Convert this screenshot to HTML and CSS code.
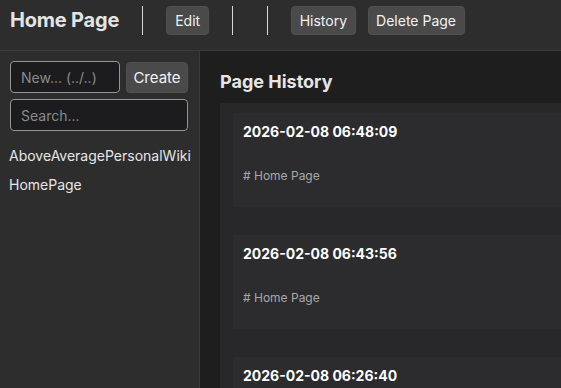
FILE: index.html
```html
<!DOCTYPE html>
<html lang="en">
<head>
    <meta charset="UTF-8">
    <meta name="viewport" content="width=device-width, initial-scale=1.0">
    <title>Home Page - History</title>
    <link rel="stylesheet" href="styles.css">
</head>
<body>
    <header class="topbar">
        <h1 class="page-title">Home Page</h1>
        <span class="sep"></span>
        <button class="btn">Edit</button>
        <span class="sep"></span>
        <span class="sep"></span>
        <button class="btn">History</button>
        <button class="btn">Delete Page</button>
    </header>

    <div class="layout">
        <aside class="sidebar">
            <div class="new-row">
                <input class="field new-input" type="text" placeholder="New... (../..)">
                <button class="btn create-btn">Create</button>
            </div>
            <input class="field search-input" type="text" placeholder="Search...">
            <nav class="page-list">
                <a href="#">AboveAveragePersonalWiki</a>
                <a href="#">HomePage</a>
            </nav>
        </aside>

        <main class="content">
            <h2 class="section-title">Page History</h2>
            <div class="history-panel">
                <div class="history-item">
                    <h3>2026-02-08 06:48:09</h3>
                    <div class="preview"># Home Page</div>
                </div>
                <div class="history-item">
                    <h3>2026-02-08 06:43:56</h3>
                    <div class="preview"># Home Page</div>
                </div>
                <div class="history-item">
                    <h3>2026-02-08 06:26:40</h3>
                    <div class="preview"># Home Page</div>
                </div>
            </div>
        </main>
    </div>
</body>
</html>
```

FILE: styles.css
```css
body {
    font-family: Inter, "Liberation Sans", sans-serif;
    background: #1e1e1e;
    color: #e6e6e6;
    margin: 0;
    padding: 0;
    height: 100vh;
    display: flex;
    flex-direction: column;
    overflow: hidden;
}

/* Barra superior */
.topbar {
    display: flex;
    align-items: center;
    gap: 12px;
    padding: 6px 10px 15px;
    background: #2d2d2d;
    border-bottom: 1px solid #3a3a3a;
    min-width: 700px;
}
.page-title {
    margin: 0;
    font-size: 20px;
    font-weight: 700;
    letter-spacing: -0.2px;
    color: #e4e4e4;
    line-height: 29px;
}
.sep {
    width: 1px;
    height: 29px;
    background: #d8d8d8;
    margin: 0 11px;
}
.btn {
    font-family: inherit;
    font-size: 14px;
    color: #f2f2f2;
    background: #4a4a4a;
    border: 1px solid #505050;
    border-radius: 4px;
    height: 29px;
    min-width: 43px;
    padding: 0 7.5px;
    cursor: pointer;
}
.btn:hover {
    background: #555;
}

/* Columnas */
.layout {
    flex: 1;
    display: flex;
    min-width: 700px;
}
.sidebar {
    width: 178px;
    padding: 10px 11px 10px 10px;
    background: #2d2d2d;
    border-right: 1px solid #3a3a3a;
}
.new-row {
    display: flex;
    gap: 6px;
}
.field {
    font-family: inherit;
    font-size: 14px;
    color: #e6e6e6;
    background: #1c1c1e;
    border: 1px solid #959595;
    border-radius: 4px;
    height: 32px;
    padding: 0 10px;
    box-sizing: border-box;
}
.field::placeholder {
    color: #8a8a8a;
}
.new-input {
    width: 110px;
}
.create-btn {
    flex: 1;
    height: 31px;
    margin-top: 1px;
    padding: 0 5px;
    font-size: 15px;
}
.search-input {
    display: block;
    width: 100%;
    margin-top: 6px;
}
.page-list {
    margin-top: 16px;
}
.page-list a {
    display: block;
    color: #e6e6e6;
    text-decoration: none;
    font-size: 14px;
    line-height: 17px;
    margin-left: -1px;
    margin-bottom: 12px;
}

/* Historial */
.content {
    flex: 1;
    padding: 0 0 0 20px;
}
.section-title {
    margin: 20px 0 10px;
    font-size: 18px;
    font-weight: 700;
    line-height: 22px;
    color: #e6e6e6;
}
.history-panel {
    background: #28282a;
    padding: 10px 0 0 13px;
}
.history-item {
    background: #2c2c2e;
    padding: 10px 10px 25px;
    height: 59px;
    margin-bottom: 28px;
}
.history-item h3 {
    margin: 0;
    font-size: 14px;
    font-weight: 700;
    line-height: 18px;
    color: #fff;
}
.preview {
    margin-top: 27px;
    font-size: 12px;
    line-height: 15px;
    color: #a8a8a8;
}
```
